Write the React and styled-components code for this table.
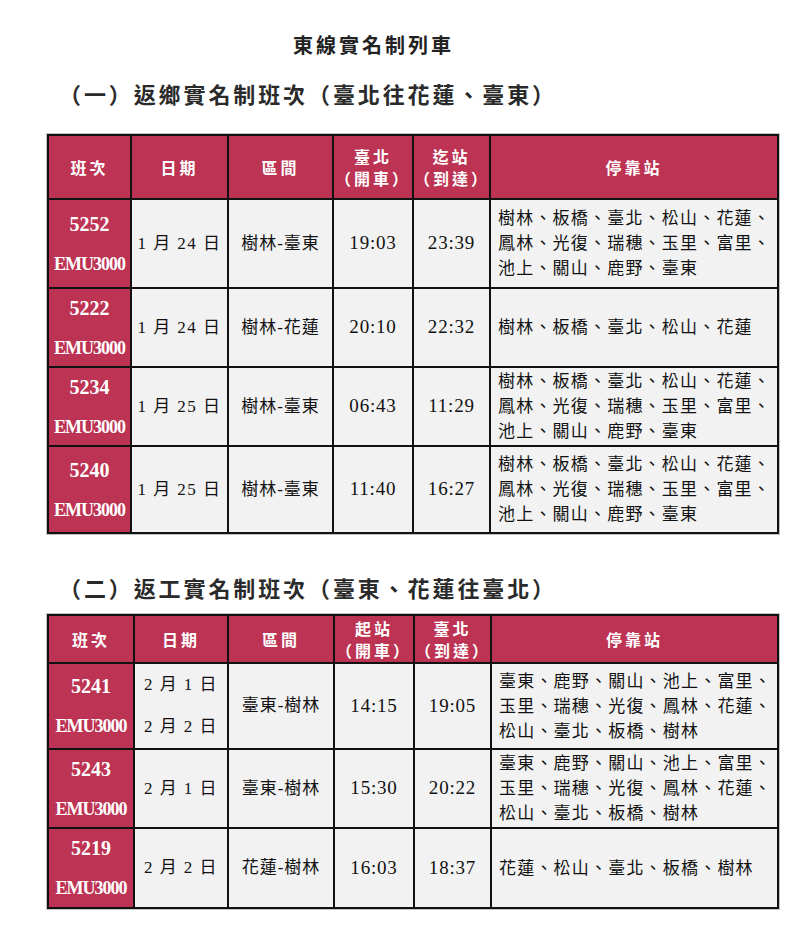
import React from "react";
import styled, {createGlobalStyle} from "styled-components";

// page setup
const GlobalStyle = createGlobalStyle`
    body {
        margin: 0;
        background: #ffffff;
        font-family: "Liberation Serif", "Noto Sans CJK TC", serif;
        color: #111111;
    }
`;

const Page = styled.div`
    width: 799px;
    padding: 31px 0 0 47px;
    box-sizing: border-box;
`;

const Title = styled.h1`
    margin: 0;
    padding-left: 246px;
    font-family: "Noto Sans CJK TC", sans-serif;
    font-size: 20px;
    line-height: 28px;
    font-weight: 700;
    letter-spacing: 3px;
    color: #222222;
`;

const SectionTitle = styled.h2`
    margin: ${props => props.$top}px 0 ${props => props.$bottom}px 0;
    padding-left: 12px;
    font-family: "Noto Sans CJK TC", sans-serif;
    font-size: 22px;
    line-height: 30px;
    font-weight: 700;
    letter-spacing: 2.9px;
    color: #2a2a2a;
`;

const Table = styled.table`
    width: 730px;
    table-layout: fixed;
    border-collapse: collapse;
    outline: 1px solid #c4c4c4;
    border: 2px solid #111111;
`;

const HeadCell = styled.th`
    background: #bd3353;
    color: #ffffff;
    border: 2px solid #111111;
    height: ${props => props.$h}px;
    padding: 0;
    font-family: "Noto Sans CJK TC", sans-serif;
    font-size: 16px;
    line-height: 22px;
    font-weight: 700;
    letter-spacing: 3px;
    text-align: center;
    vertical-align: middle;
`;

const HeadLine = styled.div`
    height: 22px;
    overflow: visible;
`;

const Row = styled.tr`
    height: ${props => props.$h}px;
`;

const TrainCell = styled.td`
    background: #bd3353;
    color: #ffffff;
    border: 2px solid #111111;
    padding: 0;
    text-align: center;
    vertical-align: middle;
`;

const Stack = styled.div`
    display: flex;
    flex-direction: column;
    align-items: center;
    gap: ${props => props.$gap}px;
`;

const TrainNo = styled.span`
    font-family: "Liberation Serif", serif;
    font-weight: 700;
    font-size: 20px;
    line-height: 22px;
`;

const TrainType = styled.span`
    font-family: "Liberation Serif", serif;
    font-weight: 700;
    font-size: 18px;
    line-height: 22px;
    letter-spacing: -1px;
`;

const Cell = styled.td`
    background: #f2f2f2;
    border: 2px solid #111111;
    padding: 0;
    text-align: ${props => (props.$left ? "left" : "center")};
    padding-left: ${props => (props.$left ? 7 : 0)}px;
    vertical-align: middle;
    font-family: "Liberation Serif", "Noto Sans CJK TC", serif;
    font-size: 17px;
    line-height: 22px;
    color: #111111;
`;

const DateText = styled.span`
    font-size: 17px;
    line-height: 22px;
    letter-spacing: 1.5px;
    white-space: pre;
`;

const TimeText = styled.span`
    font-size: 19px;
    letter-spacing: 0.8px;
`;

const RangeText = styled.span`
    letter-spacing: 1px;
`;

const StopLine = styled.div`
    font-size: 17px;
    line-height: 25px;
    letter-spacing: 1.2px;
    white-space: nowrap;
`;

const Spacer = styled.div`
    height: ${props => props.$h}px;
`;

const STOPS_OUT = ["樹林、板橋、臺北、松山、花蓮、", "鳳林、光復、瑞穗、玉里、富里、", "池上、關山、鹿野、臺東"];
const STOPS_BACK = ["臺東、鹿野、關山、池上、富里、", "玉里、瑞穗、光復、鳳林、花蓮、", "松山、臺北、板橋、樹林"];

const table1 = {
    widths: [83, 97, 105, 80, 77, 288],
    headH: 62,
    heads: ["班次", "日期", "區間", "臺北\n（開車）", "迄站\n（到達）", "停靠站"],
    rows: [
        {no: "5252", dates: ["1 月 24 日"], range: "樹林-臺東", dep: "19:03", arr: "23:39", stops: STOPS_OUT, h: 89},
        {no: "5222", dates: ["1 月 24 日"], range: "樹林-花蓮", dep: "20:10", arr: "22:32", stops: ["樹林、板橋、臺北、松山、花蓮"], h: 79},
        {no: "5234", dates: ["1 月 25 日"], range: "樹林-臺東", dep: "06:43", arr: "11:29", stops: STOPS_OUT, h: 79},
        {no: "5240", dates: ["1 月 25 日"], range: "樹林-臺東", dep: "11:40", arr: "16:27", stops: STOPS_OUT, h: 87},
    ],
};

const table2 = {
    widths: [86, 94, 106, 80, 77, 287],
    headH: 46,
    heads: ["班次", "日期", "區間", "起站\n（開車）", "臺北\n（到達）", "停靠站"],
    rows: [
        {no: "5241", dates: ["2 月 1 日", "2 月 2 日"], range: "臺東-樹林", dep: "14:15", arr: "19:05", stops: STOPS_BACK, h: 86},
        {no: "5243", dates: ["2 月 1 日"], range: "臺東-樹林", dep: "15:30", arr: "20:22", stops: STOPS_BACK, h: 79},
        {no: "5219", dates: ["2 月 2 日"], range: "花蓮-樹林", dep: "16:03", arr: "18:37", stops: ["花蓮、松山、臺北、板橋、樹林"], h: 80},
    ],
};

function Timetable({data}) {
    return (
        <Table>
            <colgroup>
                {data.widths.map((w, i) => <col key={i} style={{width: w}} />)}
            </colgroup>
            <thead>
                <tr>
                    {data.heads.map((h, i) => (
                        <HeadCell key={i} $h={data.headH}>
                            {h.split("\n").map((line, j) => <HeadLine key={j}>{line}</HeadLine>)}
                        </HeadCell>
                    ))}
                </tr>
            </thead>
            <tbody>
                {data.rows.map(row => (
                    <Row key={row.no} $h={row.h}>
                        <TrainCell>
                            <Stack $gap={18}>
                                <TrainNo>{row.no}</TrainNo>
                                <TrainType>EMU3000</TrainType>
                            </Stack>
                        </TrainCell>
                        <Cell>
                            <Stack $gap={20}>
                                {row.dates.map(d => <DateText key={d}>{d}</DateText>)}
                            </Stack>
                        </Cell>
                        <Cell><RangeText>{row.range}</RangeText></Cell>
                        <Cell><TimeText>{row.dep}</TimeText></Cell>
                        <Cell><TimeText>{row.arr}</TimeText></Cell>
                        <Cell $left>
                            {row.stops.map(s => <StopLine key={s}>{s}</StopLine>)}
                        </Cell>
                    </Row>
                ))}
            </tbody>
        </Table>
    );
}

export default function App() {
    return (
        <>
            <GlobalStyle />
            <Page>
                <Title>東線實名制列車</Title>
                <SectionTitle $top={19} $bottom={26}>（一）返鄉實名制班次（臺北往花蓮、臺東）</SectionTitle>
                <Timetable data={table1} />
                <SectionTitle $top={38} $bottom={12}>（二）返工實名制班次（臺東、花蓮往臺北）</SectionTitle>
                <Timetable data={table2} />
                <Spacer $h={20} />
            </Page>
        </>
    );
}
